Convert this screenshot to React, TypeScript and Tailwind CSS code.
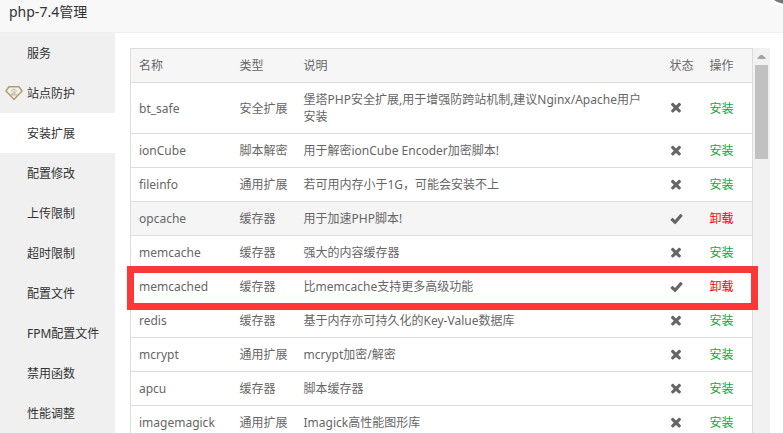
import React from 'react';

type Extension = {
  name: string;
  type: string;
  desc: string;
  installed?: boolean;
  shaded?: boolean;
  marked?: boolean;
};

const menu = [
  '服务',
  '站点防护',
  '安装扩展',
  '配置修改',
  '上传限制',
  '超时限制',
  '配置文件',
  'FPM配置文件',
  '禁用函数',
  '性能调整',
];

const extensions: Extension[] = [
  { name: 'bt_safe', type: '安全扩展', desc: '堡塔PHP安全扩展,用于增强防跨站机制,建议Nginx/Apache用户安装' },
  { name: 'ionCube', type: '脚本解密', desc: '用于解密ionCube Encoder加密脚本!' },
  { name: 'fileinfo', type: '通用扩展', desc: '若可用内存小于1G，可能会安装不上' },
  { name: 'opcache', type: '缓存器', desc: '用于加速PHP脚本!', installed: true, shaded: true },
  { name: 'memcache', type: '缓存器', desc: '强大的内容缓存器' },
  { name: 'memcached', type: '缓存器', desc: '比memcache支持更多高级功能', installed: true, marked: true },
  { name: 'redis', type: '缓存器', desc: '基于内存亦可持久化的Key-Value数据库' },
  { name: 'mcrypt', type: '通用扩展', desc: 'mcrypt加密/解密' },
  { name: 'apcu', type: '缓存器', desc: '脚本缓存器' },
  { name: 'imagemagick', type: '通用扩展', desc: 'Imagick高性能图形库' },
];

const DiamondIcon = () => (
  <svg className="w-[18px] h-4" viewBox="0 0 18 16" fill="none" stroke="#b49a6c" aria-hidden="true">
    <path d="M4 1.7h10l3 4.2L9 14.5 1 5.9z" strokeWidth="1.5" />
    <path d="M6 6.4 9 3.8l3 2.6M9 5.8v4M9 7.8h1.8M7.2 7.4v2.4M5.8 9.9h6.4" strokeWidth="1" opacity="0.75" />
  </svg>
);

const CheckIcon = () => (
  <svg className="block w-[13px] h-3" viewBox="0 0 13 12" fill="#666" role="img" aria-label="已安装">
    <path d="M.6 6.500 2.200 5q.4-.4.8 0L5 6.900 10.200 1.100q.4-.4.8 0l1.500 1.400q.4.4 0 .8L5.600 10.900q-.5.5-1 0L.6 7.300q-.4-.4 0-.8z" />
  </svg>
);

const CrossIcon = () => (
  <svg className="block w-[13px] h-3" viewBox="0 0 13 12" fill="#666" role="img" aria-label="未安装">
    <path d="M3.200.8 6 3.400 8.800.8q.4-.3.8 0l1.300 1.300q.4.4 0 .8L8.300 5.700l2.600 2.800q.4.4 0 .8l-1.300 1.300q-.4.3-.8 0L6 8 3.200 10.600q-.4.3-.8 0L1.100 9.300q-.4-.4 0-.8l2.600-2.800L1.100 2.900q-.4-.4 0-.8L2.400.8q.4-.3.8 0z" />
  </svg>
);

const Sidebar = () => (
  <nav className="w-[115px] shrink-0 bg-[#f0f0f0] text-[#333]">
    {menu.map((item) => (
      <a
        key={item}
        href="#"
        className={`flex items-center h-10 pl-[5px] ${item === '安装扩展' ? 'bg-white' : ''}`}
      >
        <span className="w-[22px] shrink-0">{item === '站点防护' && <DiamondIcon />}</span>
        {item}
      </a>
    ))}
  </nav>
);

const ExtensionRow = ({ ext }: { ext: Extension }) => (
  <tr className={`relative border-b border-[#ddd] ${ext.shaded ? 'bg-[#f5f5f5]' : ''}`}>
    <td className="py-2 pl-2">
      {ext.name}
      {/* Red marker frame around the whole row */}
      {ext.marked && (
        <span className="absolute -top-1 -bottom-[7px] -left-1 -right-[5px] border-[7px] border-[#fb3838] pointer-events-none" />
      )}
    </td>
    <td className="py-2 pl-2">{ext.type}</td>
    <td className="py-2 pl-2 pr-4">{ext.desc}</td>
    <td className="py-2 pl-2">{ext.installed ? <CheckIcon /> : <CrossIcon />}</td>
    <td className="py-2 pl-2">
      <a href="#" className={ext.installed ? 'text-[#f00]' : 'text-[#20a53a]'}>
        {ext.installed ? '卸载' : '安装'}
      </a>
    </td>
  </tr>
);

const Scrollbar = () => (
  <div className="w-[17px] shrink-0 bg-[#f1f1f1] flex flex-col items-center" aria-hidden="true">
    <svg className="w-[17px] h-[17px] shrink-0" viewBox="0 0 17 17" fill="#a3a3a3">
      <path d="M4.500 11h8v-1l-3-3h-2l-3 3z" />
    </svg>
    <div className="w-[13px] h-[94px] bg-[#c1c1c1]"></div>
  </div>
);

export default function App() {
  return (
    <div className="relative h-screen flex flex-col overflow-hidden bg-white font-['Noto_Sans','Noto_Sans_CJK_SC',sans-serif] text-xs leading-[17px] text-[#666]">
      <header className="h-[33px] shrink-0 flex items-center pl-[9px] pb-2 bg-[#f8f8f8] border-b border-[#eee]">
        <h1 className="text-sm text-[#333]">php-7.4管理</h1>
      </header>
      <button
        type="button"
        aria-label="关闭"
        className="absolute -top-[39px] -right-[26px] w-[46px] h-[46px] rounded-full border-[3px] border-white bg-[#777]"
      ></button>

      <div className="flex flex-1 min-h-0">
        <Sidebar />
        <main className="flex flex-1 min-w-0 pt-[15px] pl-[15px] pr-[13px]">
          <div className="flex-1 min-w-0">
            <table className="w-full table-fixed border-collapse border border-[#ddd] text-left">
              <thead>
                <tr className="bg-[#f6f6f6] border-b border-[#ddd]">
                  <th className="w-[101px] py-2 pl-2 font-normal">名称</th>
                  <th className="w-16 py-2 pl-2 font-normal">类型</th>
                  <th className="py-2 pl-2 font-normal">说明</th>
                  <th className="w-10 py-2 pl-2 font-normal whitespace-nowrap">状态</th>
                  <th className="w-[51px] py-2 pl-2 font-normal">操作</th>
                </tr>
              </thead>
              <tbody>
                {extensions.map((ext) => (
                  <ExtensionRow key={ext.name} ext={ext} />
                ))}
              </tbody>
            </table>
          </div>
          <Scrollbar />
        </main>
      </div>
    </div>
  );
}
